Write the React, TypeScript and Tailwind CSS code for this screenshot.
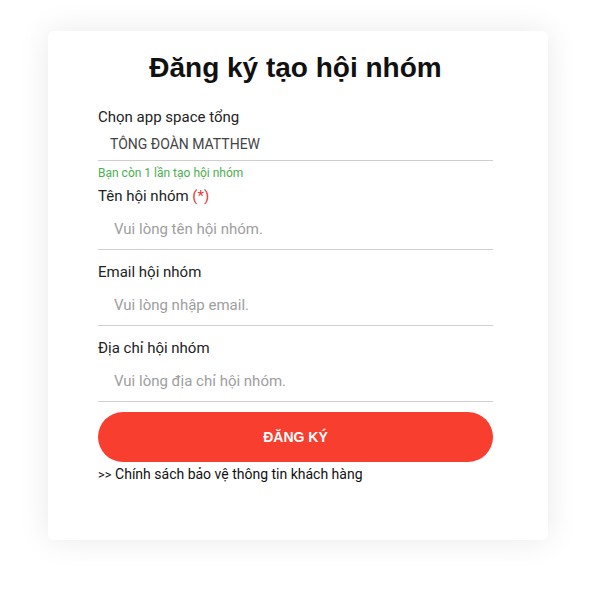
export default function App() {
  const fields = [
    { label: 'Tên hội nhóm', required: true, placeholder: 'Vui lòng tên hội nhóm.' },
    { label: 'Email hội nhóm', required: false, placeholder: 'Vui lòng nhập email.' },
    { label: 'Địa chỉ hội nhóm', required: false, placeholder: 'Vui lòng địa chỉ hội nhóm.' },
  ];

  return (
    <div className="min-h-[606px] bg-white pt-[31px] pl-[48px]" style={{ fontFamily: 'Roboto, sans-serif' }}>
      <div className="w-[500px] h-[509px] rounded-[6px] bg-white shadow-[0_0_32px_rgba(0,0,0,0.09)] pt-[20px] px-[50px]">
        <div className="w-[395px]">
          <h1 className="text-center text-[28px] leading-[34px] font-bold text-[#111] font-['Liberation_Sans',Arial,sans-serif]">
            Đăng ký tạo hội nhóm
          </h1>

          <label className="block mt-[22px] text-[15px] leading-[20px] text-[#222]">Chọn app space tổng</label>
          <div className="border-b border-[#cfcfcf] pl-[12px] pt-[7px] pb-[6px] text-[14px] leading-[20px] text-[#444]">
            TÔNG ĐOÀN MATTHEW
          </div>
          <div className="mt-[5px] text-[12px] leading-[14px] text-[#4caf50]">Bạn còn 1 lần tạo hội nhóm</div>

          {fields.map((f, i) => (
            <div key={f.label} className={i === 0 ? 'mt-[6px]' : 'mt-[12px]'}>
              <label className="block text-[15px] leading-[20px] text-[#222]">
                {f.label}
                {f.required && <span className="text-[#e53935]"> (*)</span>}
              </label>
              <input
                placeholder={f.placeholder}
                className="block w-full border-b border-[#cfcfcf] pl-[16px] pt-[13px] pb-[10px] text-[15px] leading-[20px] outline-none placeholder:text-[#9e9e9e]"
              />
            </div>
          ))}

          <button className="mt-[10px] w-full h-[50px] rounded-full bg-[#f73e2f] text-white text-[14px] font-bold font-['Liberation_Sans',Arial,sans-serif]">
            ĐĂNG KÝ
          </button>
          <div className="mt-[3px] text-[14px] leading-[18px] text-[#111]">
            <span className="text-[13px]">&gt;&gt;</span> Chính sách bảo vệ thông tin khách hàng
          </div>
        </div>
      </div>
    </div>
  );
}
